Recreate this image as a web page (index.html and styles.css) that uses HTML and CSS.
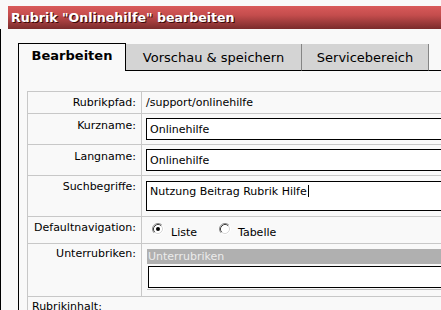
FILE: index.html
```html
<!DOCTYPE html>
<html lang="de">
<head>
<meta charset="utf-8">
<title>Rubrik bearbeiten</title>
<link rel="stylesheet" href="styles.css">
</head>
<body>
<div class="window">
  <h1 class="titlebar">Rubrik "Onlinehilfe" bearbeiten</h1>
  <div class="frame">
    <div class="tabs">
      <div class="tab active">Bearbeiten</div>
      <div class="tab tab-preview">Vorschau &amp; speichern</div>
      <div class="tab tab-service">Servicebereich</div>
      <div class="tab-fill"></div>
    </div>
    <div class="panel">
      <div class="form">
        <div class="label">Rubrikpfad:</div>
        <div class="value text">/support/onlinehilfe</div>

        <div class="label label-input">Kurzname:</div>
        <div class="value"><input class="field" type="text" value="Onlinehilfe"></div>

        <div class="label label-input">Langname:</div>
        <div class="value"><input class="field" type="text" value="Onlinehilfe"></div>

        <div class="label">Suchbegriffe:</div>
        <div class="value"><div class="field area">Nutzung Beitrag Rubrik Hilfe<span class="caret"></span></div></div>

        <div class="label">Defaultnavigation:</div>
        <div class="value radios">
          <label class="option">
            <svg class="radio" viewBox="0 0 12 12" width="12" height="12">
              <circle cx="6" cy="6" r="4.5" fill="#fff"/>
              <path d="M2.11 9.89A5.5 5.5 0 0 1 9.89 2.11" fill="none" stroke="#8a8a8a"/>
              <path d="M9.89 2.11A5.5 5.5 0 0 1 2.11 9.89" fill="none" stroke="#ffffff"/>
              <path d="M2.82 9.18A4.5 4.5 0 0 1 9.18 2.82" fill="none" stroke="#404040"/>
              <path d="M9.18 2.82A4.5 4.5 0 0 1 2.82 9.18" fill="none" stroke="#d8d8d8"/>
              <circle cx="6" cy="6" r="2" fill="#000"/>
            </svg>
            <span>Liste</span>
          </label>
          <label class="option">
            <svg class="radio" viewBox="0 0 12 12" width="12" height="12">
              <circle cx="6" cy="6" r="4.5" fill="#fff"/>
              <path d="M2.11 9.89A5.5 5.5 0 0 1 9.89 2.11" fill="none" stroke="#8a8a8a"/>
              <path d="M9.89 2.11A5.5 5.5 0 0 1 2.11 9.89" fill="none" stroke="#ffffff"/>
              <path d="M2.82 9.18A4.5 4.5 0 0 1 9.18 2.82" fill="none" stroke="#404040"/>
              <path d="M9.18 2.82A4.5 4.5 0 0 1 2.82 9.18" fill="none" stroke="#d8d8d8"/>
            </svg>
            <span>Tabelle</span>
          </label>
        </div>

        <div class="label label-sub">Unterrubriken:</div>
        <div class="value">
          <div class="sublist">
            <div class="sublist-head">Unterrubriken</div>
            <div class="sublist-box"></div>
          </div>
        </div>

        <div class="wide">Rubrikinhalt:</div>
      </div>
    </div>
  </div>
</div>
</body>
</html>
```

FILE: styles.css
```css
html, body {
  margin: 0;
  padding: 0;
  background: #f9f9f9;
  overflow: hidden;
}

body {
  width: 441px;
  height: 310px;
  font-family: "DejaVu Sans", Verdana, sans-serif;
  color: #000;
}

.window {
  width: 441px;
  height: 310px;
  overflow: hidden;
  padding-top: 6px;
  box-sizing: border-box;
}

.titlebar {
  margin: 0 0 0 8px;
  height: 23px;
  padding-left: 3px;
  background: linear-gradient(to bottom, #d95a5a 0%, #c44d4d 40%, #7a2b2b 100%);
  color: #fff;
  font-size: 12.6px;
  font-weight: bold;
  line-height: 24px;
  white-space: nowrap;
  text-shadow: 1px 1px 0 #3a0808;
}

.frame {
  border-left: 1px solid #000;
  padding: 14px 0 0 17px;
  height: 300px;
}

.tabs {
  display: flex;
  align-items: flex-end;
  width: 600px;
  font-size: 13px;
}

.tab {
  box-sizing: content-box;
  height: 25px;
  padding-top: 1px;
  line-height: 25px;
  text-align: center;
  white-space: nowrap;
  background: #d4d4d4;
  border-right: 1px solid #858585;
  border-bottom: 1px solid #000;
}

.tab.active {
  width: 106px;
  height: 27px;
  padding-top: 0;
  line-height: 23px;
  font-weight: bold;
  background: #f9f9f9;
  border: 1px solid #000;
  border-bottom: none;
}

.tab-preview {
  width: 175px;
}

.tab-service {
  width: 126px;
}

.tab-fill {
  flex: 1;
  border-bottom: 1px solid #000;
}

.panel {
  border-left: 1px solid #000;
  padding: 20px 0 0 8px;
  height: 260px;
}

.form {
  display: grid;
  grid-template-columns: 113px 1fr;
  grid-template-rows: 21px 30px 30px 40px 26px 52px 40px;
  gap: 1px;
  width: 480px;
  background: #c8c8c8;
  border: 1px solid #c8c8c8;
  font-size: 11px;
  line-height: 14px;
}

.label,
.value,
.wide {
  background: #f9f9f9;
}

.label {
  text-align: right;
  padding: 4px 5px 0 0;
  white-space: nowrap;
}

.label-input {
  padding-top: 5px;
}

.value {
  padding-left: 4px;
}

.value.text {
  padding-top: 4px;
}

.field {
  display: block;
  box-sizing: border-box;
  width: 300px;
  height: 22px;
  margin: 4px 0 0 0;
  padding: 0 3px;
  border: 1px solid #000;
  border-radius: 0;
  background: #fff;
  font-family: "DejaVu Sans", Verdana, sans-serif;
  font-size: 11px;
  color: #000;
  outline: none;
}

.field.area {
  height: 30px;
  margin-top: 5px;
  padding-top: 3px;
  line-height: 14px;
  white-space: nowrap;
}

.caret {
  display: inline-block;
  width: 1px;
  height: 12px;
  margin-left: 1px;
  background: #000;
  vertical-align: -2px;
}

.radios {
  display: flex;
  align-items: flex-start;
  padding: 6px 0 0 10px;
}

.option {
  display: flex;
  align-items: flex-start;
  gap: 7px;
  width: 67px;
}

.option span {
  padding-top: 3px;
}

.radio {
  display: block;
  flex: none;
}

.label-sub {
  padding-top: 3px;
}

.sublist {
  margin: 5px 0 0 1px;
  padding-bottom: 1px;
  border-bottom: 1px solid #c0c0c0;
}

.sublist-head {
  height: 15px;
  padding-left: 1px;
  background: #b0b0b0;
  color: #ececec;
  line-height: 15px;
}

.sublist-box {
  height: 22px;
  box-sizing: border-box;
  margin: 2px 0 0 1px;
  border: 1px solid #000;
  background: #fff;
}

.wide {
  grid-column: 1 / span 2;
  padding: 3px 0 0 4px;
}
```
